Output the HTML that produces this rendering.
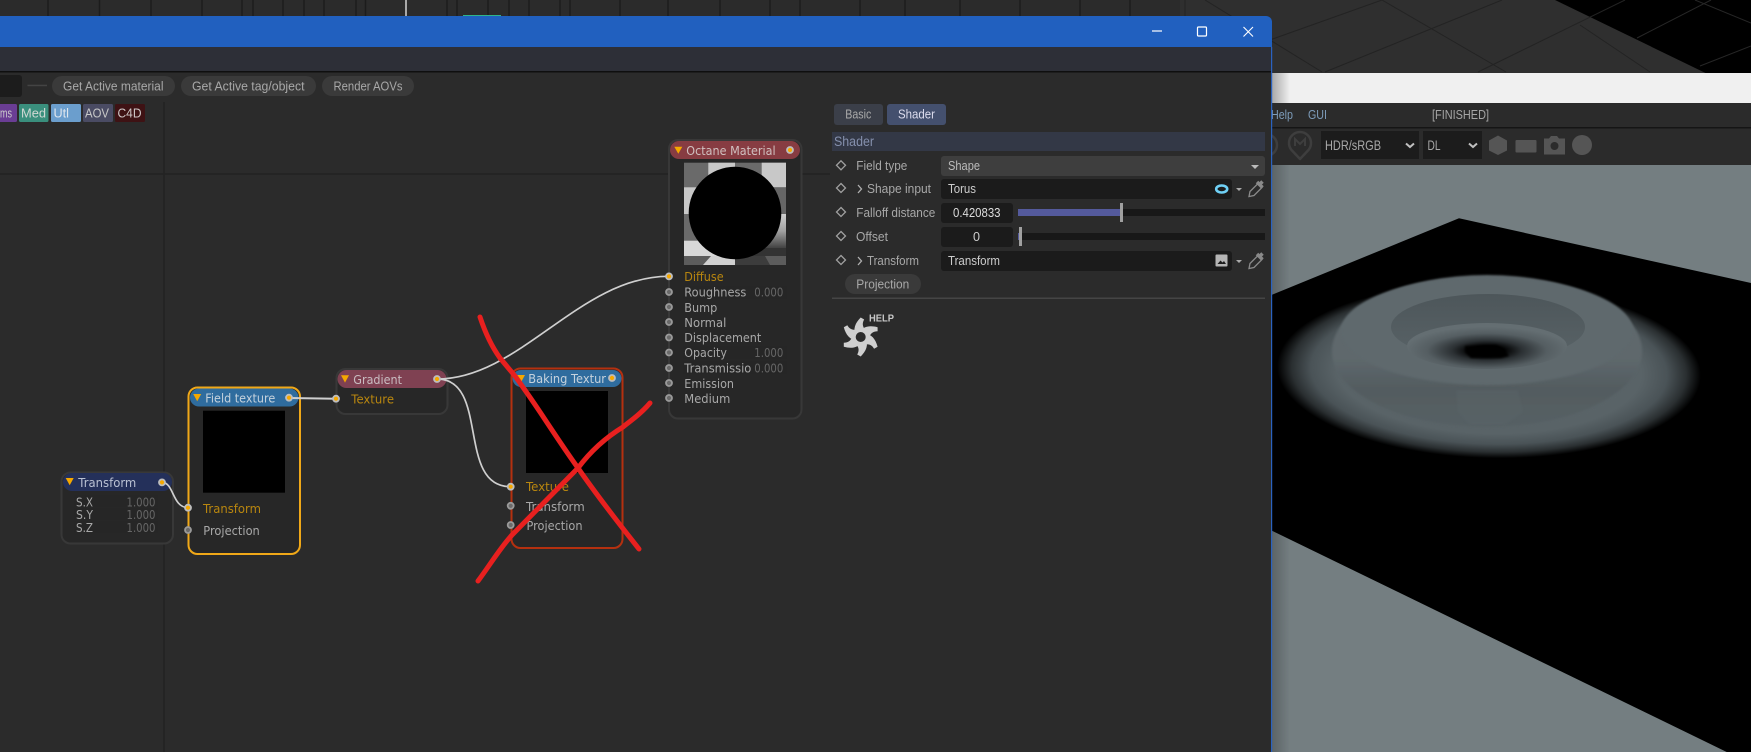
<!DOCTYPE html>
<html><head><meta charset="utf-8"><style>
html,body{margin:0;padding:0;background:#2b2b2b;overflow:hidden}
svg{display:block}
text{font-family:"DejaVu Sans",sans-serif;font-size:12.5px;fill:#a8a8a8}
.l text,text.l{font-family:"Liberation Sans",sans-serif;font-size:12.5px}
.o{fill:#b8860f}
.v{fill:#666}
</style></head><body>
<svg xmlns="http://www.w3.org/2000/svg" width="1751" height="752" viewBox="0 0 1751 752">
<defs>
<linearGradient id="sh" x1="0" x2="1" y1="0" y2="0"><stop offset="0" stop-color="#000" stop-opacity=".3"/><stop offset="1" stop-color="#000" stop-opacity="0"/></linearGradient>
<radialGradient id="outer" cx=".5" cy=".5" r=".5"><stop offset="0" stop-color="#5c666a"/><stop offset=".72" stop-color="#596367"/><stop offset=".84" stop-color="#4a5357"/><stop offset=".93" stop-color="#2a2f31"/><stop offset="1" stop-color="#000"/></radialGradient>
<radialGradient id="floor" cx=".5" cy=".6" r=".52"><stop offset="0" stop-color="#000"/><stop offset=".2" stop-color="#000"/><stop offset=".42" stop-color="#2c3134"/><stop offset=".72" stop-color="#555e62"/><stop offset="1" stop-color="#646e72"/></radialGradient>
<linearGradient id="trough" x1="0" x2="0" y1="0" y2="1"><stop offset="0" stop-color="#4d565a"/><stop offset="1" stop-color="#596367"/></linearGradient>
<linearGradient id="body" x1="0" x2="0" y1="0" y2="1"><stop offset="0" stop-color="#5e686c"/><stop offset=".55" stop-color="#5e686c"/><stop offset=".75" stop-color="#535c60"/><stop offset="1" stop-color="#566064"/></linearGradient>
<linearGradient id="lg" x1="0" x2="0" y1="0" y2="1"><stop offset="0" stop-color="#cfcfcf"/><stop offset=".45" stop-color="#a0a0a0"/><stop offset="1" stop-color="#2c2c2c"/></linearGradient>
<filter id="b1"><feGaussianBlur stdDeviation="1"/></filter>
<path id="blade" d="M0,-19.500 L3.500,-17.500 C1.500,-14 1.500,-11 4.500,-7 L-5,-1 C-8,-8 -5.500,-14 0,-19.500 Z" fill="#cfcfcf"/>
<clipPath id="vp"><rect x="1272" y="165" width="479" height="587"/></clipPath>
</defs>

<rect width="1751" height="752" fill="#2b2b2b"/>

<!-- top strip ticks -->
<g stroke="#1c1c1c" stroke-width="1.5">
<path d="M48,0V16M99.500,0V16M151,0V16M202,0V16M242,0V16M253,0V16M283,0V16M304,0V16M324,0V16M356,0V16M365.500,0V16M447,0V16M457,0V16M488,0V16M509,0V16M529,0V16M560,0V16M570,0V16M620,0V16M668,0V16M720,0V16M770,0V16M800,0V16M860,0V16M905,0V16M960,0V16M1020,0V16M1080,0V16M1130,0V16M1186,0V16"/>
</g>
<rect x="405" y="0" width="2" height="16" fill="#a9a9a9"/>
<rect x="463" y="15" width="38" height="2" fill="#2fb58a"/>

<!-- 3D viewport top -->
<rect x="1180" y="0" width="571" height="73" fill="#2f2f2f"/>
<polygon points="1555,0 1751,0 1751,73 1705.500,73" fill="#000"/>
<g stroke="#232323" stroke-width="1" fill="none">
<path d="M1225,56L1382,0M1382,0L1506,72M1325,72L1502,0M1205,0L1322,72M1478,72L1625,0M1580,25L1650,72M1185,0V18"/>
</g>
<g stroke="#262626" stroke-width="1" fill="none">
<path d="M1637,38L1711,0M1695,0L1751,23M1700,66L1751,46"/>
</g>

<!-- white strip -->
<rect x="1272" y="73" width="479" height="30" fill="#f0f0f0"/>
<rect x="1272" y="73" width="18" height="30" fill="url(#sh)"/>

<!-- help row and toolbar -->
<rect x="1272" y="103" width="479" height="62" fill="#2b2b2b"/>
<rect x="1272" y="127" width="479" height="1.500" fill="#151515"/>
<g class="l">
<text x="1271" y="119" textLength="22" lengthAdjust="spacingAndGlyphs" style="fill:#7d9cba">Help</text>
<text x="1308" y="119" textLength="19" lengthAdjust="spacingAndGlyphs" style="fill:#7d9cba">GUI</text>
<text x="1432" y="119" textLength="57" lengthAdjust="spacingAndGlyphs" style="fill:#a5a5a5">[FINISHED]</text>
</g>
<circle cx="1266" cy="145" r="11" fill="none" stroke="#3e3e3e" stroke-width="2.500"/>
<path d="M1291.500,150a11,11 0 1 1 17,0L1300,159Z" fill="none" stroke="#3e3e3e" stroke-width="2.500" stroke-linejoin="round"/>
<path d="M1295,146v-7l5,5 5,-5v7" fill="none" stroke="#3e3e3e" stroke-width="2"/>
<rect x="1321" y="131" width="98" height="28" fill="#1c1c1c"/>
<rect x="1423" y="131" width="59" height="28" fill="#1c1c1c"/>
<g class="l">
<text x="1325" y="150" textLength="56" lengthAdjust="spacingAndGlyphs" style="fill:#a8a8a8;font-size:14px">HDR/sRGB</text>
<text x="1427.500" y="150" textLength="13" lengthAdjust="spacingAndGlyphs" style="fill:#a8a8a8;font-size:14px">DL</text>
</g>
<path d="M1406,143.500l4,3.500 4,-3.500M1469,143.500l4,3.500 4,-3.500" fill="none" stroke="#c0c0c0" stroke-width="2"/>
<polygon points="1498,135.500 1507,140.500 1507,150.500 1498,155 1489,150.500 1489,140.500" fill="#555"/>
<rect x="1515.500" y="140" width="21" height="12.500" rx="1" fill="#555"/>
<path d="M1544,138.500h5l2,-2.500h6l2,2.500h6v16h-21Z" fill="#555"/><circle cx="1554.500" cy="146" r="4" fill="#2b2b2b"/>
<circle cx="1582" cy="145" r="10" fill="#555"/>

<!-- viewport -->
<rect x="1272" y="165" width="479" height="587" fill="#747e81"/>
<polygon points="1272,294.700 1459,218.300 1751,283 1751,752 1726.700,752 1272,530.700" fill="#000"/>
<rect x="1272" y="165" width="18" height="130" fill="url(#sh)" opacity=".7"/>
<rect x="1272" y="531" width="18" height="221" fill="url(#sh)" opacity=".7"/>

<g clip-path="url(#vp)">
<ellipse cx="1489" cy="371" rx="212" ry="87" fill="url(#outer)" transform="rotate(1.500 1489 371)"/>
<ellipse cx="1487" cy="351" rx="155" ry="76" fill="url(#body)" filter="url(#b1)"/>
<ellipse cx="1487" cy="331" rx="146" ry="54" fill="#5e696d" filter="url(#b1)"/>
<polygon points="1456,390 1518,390 1523,412 1505,425 1470,425 1458,412" fill="#5c666b" opacity=".35" filter="url(#b1)"/>
<ellipse cx="1488" cy="327" rx="97" ry="33" fill="url(#trough)"/>
<ellipse cx="1487" cy="346" rx="80" ry="23" fill="url(#floor)"/>
<path d="M1465,346h22l9,-1 9,5 4,6 -8,2h-30l-6,-6Z" fill="#000" filter="url(#b1)"/>
</g>

<!-- window -->
<path d="M0,16H1266a6,6 0 0 1 6,6V47H0Z" fill="#2160bf"/>
<rect x="0" y="47" width="1271" height="24" fill="#2d2f37"/>
<rect x="0" y="71" width="1271" height="1.500" fill="#0f0f0f"/>
<rect x="0" y="72.500" width="1271" height="680" fill="#2b2b2b"/>
<rect x="1271" y="47" width="1.200" height="705" fill="#2a62c0"/>
<path d="M1152,31h10" stroke="#fff" stroke-width="1.200"/>
<rect x="1197.500" y="27" width="9" height="9" rx="1" fill="none" stroke="#fff" stroke-width="1.200"/>
<path d="M1243.500,27l9.500,9.500M1253,27l-9.500,9.500" stroke="#fff" stroke-width="1.100"/>

<!-- node grid -->
<path d="M164,102V752" stroke="#232323" stroke-width="1.500"/>
<path d="M0,174H830" stroke="#232323" stroke-width="1.500"/>

<!-- toolbar -->
<rect x="-4" y="75" width="26" height="22" rx="3" fill="#1c1c1c"/>
<rect x="27.500" y="84.700" width="19.500" height="1.500" fill="#444"/>
<rect x="52" y="76" width="123" height="20" rx="10" fill="#3a3a3a"/>
<rect x="181" y="76" width="135" height="20" rx="10" fill="#3a3a3a"/>
<rect x="322" y="76" width="92" height="20" rx="10" fill="#3a3a3a"/>
<g class="l">
<text x="63" y="90.500" textLength="100.500" lengthAdjust="spacingAndGlyphs" style="font-size:13px">Get Active material</text>
<text x="192" y="90.500" textLength="112.500" lengthAdjust="spacingAndGlyphs" style="font-size:13px">Get Active tag/object</text>
<text x="333.500" y="90.500" textLength="69" lengthAdjust="spacingAndGlyphs" style="font-size:13px">Render AOVs</text>
</g>

<!-- tags -->
<rect x="-5" y="104" width="22" height="18" rx="1.500" fill="#6a3d94"/>
<rect x="19" y="104" width="29.500" height="18" rx="1.500" fill="#3a8f7d"/>
<rect x="51" y="104" width="30" height="18" rx="1.500" fill="#6b9ecd"/>
<rect x="83" y="104" width="30" height="18" rx="1.500" fill="#4a4b63"/>
<rect x="115" y="104" width="30" height="18" rx="1.500" fill="#3e1214"/>
<g class="l">
<text x="0" y="117.500" textLength="12" lengthAdjust="spacingAndGlyphs" style="fill:#ccc">ms</text>
<text x="21" y="117.500" textLength="25" lengthAdjust="spacingAndGlyphs" style="fill:#d0d8d4;font-size:13px">Med</text>
<text x="53.500" y="117.500" textLength="15.500" lengthAdjust="spacingAndGlyphs" style="fill:#dfe6ee;font-size:13px">Utl</text>
<text x="85" y="117.500" textLength="24" lengthAdjust="spacingAndGlyphs" style="fill:#c8c8c8;font-size:13px">AOV</text>
<text x="117.500" y="117.500" textLength="24" lengthAdjust="spacingAndGlyphs" style="fill:#d0c8c8;font-size:13px">C4D</text>
</g>

<!-- panel -->
<rect x="834" y="104" width="49" height="21" rx="3" fill="#3b3f49"/>
<rect x="887" y="104" width="59" height="21" rx="3" fill="#44506e"/>
<rect x="832" y="132" width="433" height="19" fill="#333846"/>
<rect x="941" y="156" width="324" height="20" rx="3" fill="#3e3e3e"/>
<rect x="941" y="179" width="291" height="20" rx="3" fill="#1b1b1b"/>
<rect x="941" y="203" width="72" height="20" rx="3" fill="#1b1b1b"/>
<rect x="1018" y="209" width="247" height="7" fill="#181818"/>
<rect x="1018" y="209" width="103" height="7" fill="#545a9c"/>
<rect x="1120" y="203" width="3" height="19" fill="#a0a0a0"/>
<rect x="941" y="227" width="72" height="20" rx="3" fill="#1b1b1b"/>
<rect x="1018" y="233" width="247" height="7" fill="#181818"/>
<rect x="1018" y="233" width="2" height="7" fill="#545a9c"/>
<rect x="1019" y="227" width="3" height="19" fill="#a0a0a0"/>
<rect x="941" y="251" width="291" height="20" rx="3" fill="#1b1b1b"/>
<rect x="845" y="274" width="76" height="20" rx="10" fill="#3a3a3a"/>
<rect x="832" y="297.500" width="433" height="1.500" fill="#454545"/>
<g fill="none" stroke="#a0a0a0" stroke-width="1.300">
<path d="M841,160.800l4.500,4.500 -4.500,4.500 -4.500,-4.500Z"/>
<path d="M841,183.500l4.500,4.500 -4.500,4.500 -4.500,-4.500Z"/>
<path d="M841,207.500l4.500,4.500 -4.500,4.500 -4.500,-4.500Z"/>
<path d="M841,231.500l4.500,4.500 -4.500,4.500 -4.500,-4.500Z"/>
<path d="M841,255.500l4.500,4.500 -4.500,4.500 -4.500,-4.500Z"/>
<path d="M858,185l3.500,4 -3.500,4M858,257l3.500,4 -3.500,4" stroke="#b0b0b0"/>
</g>
<g class="l">
<text x="845.300" y="118.500" textLength="26" lengthAdjust="spacingAndGlyphs" style="fill:#aaa;font-size:13px">Basic</text>
<text x="898" y="118.500" textLength="37" lengthAdjust="spacingAndGlyphs" style="fill:#dde;font-size:13px">Shader</text>
<text x="834" y="146" textLength="40" lengthAdjust="spacingAndGlyphs" style="fill:#8590ad;font-size:13.500px">Shader</text>
<text x="856.300" y="170" textLength="51" lengthAdjust="spacingAndGlyphs" style="font-size:13px">Field type</text>
<text x="867" y="193" textLength="64" lengthAdjust="spacingAndGlyphs" style="font-size:13px">Shape input</text>
<text x="856.300" y="217" textLength="79" lengthAdjust="spacingAndGlyphs" style="font-size:13px">Falloff distance</text>
<text x="856" y="241" textLength="32" lengthAdjust="spacingAndGlyphs" style="font-size:13px">Offset</text>
<text x="867" y="265" textLength="52" lengthAdjust="spacingAndGlyphs" style="font-size:13px">Transform</text>
<text x="948" y="170" textLength="32" lengthAdjust="spacingAndGlyphs" style="fill:#bbb;font-size:13px">Shape</text>
<text x="948" y="193" textLength="28" lengthAdjust="spacingAndGlyphs" style="fill:#ccc;font-size:13px">Torus</text>
<text x="953" y="217" textLength="47.500" lengthAdjust="spacingAndGlyphs" style="fill:#ddd;font-size:13px">0.420833</text>
<text x="973" y="241" textLength="7" lengthAdjust="spacingAndGlyphs" style="fill:#ccc;font-size:13px">0</text>
<text x="948" y="265" textLength="52" lengthAdjust="spacingAndGlyphs" style="fill:#ccc;font-size:13px">Transform</text>
<text x="856.300" y="288.500" textLength="53" lengthAdjust="spacingAndGlyphs" style="font-size:13px">Projection</text>
</g>
<path d="M1251,165h8l-4,4Z" fill="#bbb"/>
<path d="M1236,188h6l-3,3Z" fill="#aaa"/>
<path d="M1236,260h6l-3,3Z" fill="#aaa"/>
<ellipse cx="1221.700" cy="189" rx="5.500" ry="3.500" fill="none" stroke="#6fd0f5" stroke-width="2.600"/>
<rect x="1215.500" y="254.500" width="12" height="12" rx="1" fill="#b5b5b5"/>
<path d="M1217.500,264l3,-3.500 2,2 1.500,-1.500 2,3Z" fill="#1b1b1b"/>
<g fill="none" stroke="#8a8a8a">
<path d="M1249,196.500l1,-5 8,-8 4,4 -8,8Z" stroke-width="1.300"/>
<path d="M1257,182l5.500,5.500M1259.500,184.500l3,-3" stroke-width="3.500"/>
<path d="M1249,268.500l1,-5 8,-8 4,4 -8,8Z" stroke-width="1.300"/>
<path d="M1257,254l5.500,5.500M1259.500,256.500l3,-3" stroke-width="3.500"/>
</g>
<!-- Octane logo -->
<g transform="translate(860.700 337)">
<use href="#blade"/>
<use href="#blade" transform="rotate(60)"/>
<use href="#blade" transform="rotate(120)"/>
<use href="#blade" transform="rotate(180)"/>
<use href="#blade" transform="rotate(240)"/>
<use href="#blade" transform="rotate(300)"/>
<circle r="5" fill="#2b2b2b"/>
</g>
<text x="869" y="321.500" textLength="25" lengthAdjust="spacingAndGlyphs" style="font-family:'Liberation Sans',sans-serif;font-size:10px;font-weight:bold;fill:#c8c8c8">HELP</text>

<!-- Transform node -->
<rect x="61.500" y="472.500" width="111.500" height="71" rx="9" fill="#272727" stroke="#383838" stroke-width="2"/>
<rect x="63" y="473" width="109" height="18" rx="9" fill="#24305a"/>
<rect x="74" y="495" width="84" height="12" fill="#262626"/><rect x="74" y="508" width="84" height="12" fill="#262626"/><rect x="74" y="521" width="84" height="12" fill="#262626"/>
<path d="M65.700,478h8l-4,7.300Z" fill="#f5a800"/>
<text x="78.300" y="487" textLength="58" lengthAdjust="spacingAndGlyphs" style="fill:#b9c0d2">Transform</text>
<text x="76" y="506.500" textLength="17" lengthAdjust="spacingAndGlyphs" style="font-size:12px;">S.X</text>
<text x="76" y="519" textLength="17" lengthAdjust="spacingAndGlyphs" style="font-size:12px;">S.Y</text>
<text x="76" y="532" textLength="17" lengthAdjust="spacingAndGlyphs" style="font-size:12px;">S.Z</text>
<text class="v" x="126.500" y="506.500" textLength="29" lengthAdjust="spacingAndGlyphs" style="font-size:12px;">1.000</text>
<text class="v" x="126.500" y="519" textLength="29" lengthAdjust="spacingAndGlyphs" style="font-size:12px;">1.000</text>
<text class="v" x="126.500" y="532" textLength="29" lengthAdjust="spacingAndGlyphs" style="font-size:12px;">1.000</text>

<!-- Field texture -->
<rect x="188.500" y="387.500" width="111.500" height="166.500" rx="9" fill="#272727" stroke="#f0a818" stroke-width="2"/>
<rect x="190" y="388.500" width="108.500" height="18" rx="9" fill="#2f6c9e"/>
<rect x="203" y="410.700" width="82" height="82" fill="#000"/>
<path d="M193.200,394h8l-4,7.300Z" fill="#f5a800"/>
<text x="205.300" y="402.500" textLength="70" lengthAdjust="spacingAndGlyphs" style="fill:#c5d2dd">Field texture</text>
<text class="o" x="203" y="513" textLength="58" lengthAdjust="spacingAndGlyphs">Transform</text>
<text x="203.300" y="535" textLength="56.500" lengthAdjust="spacingAndGlyphs">Projection</text>

<!-- Gradient -->
<rect x="336.500" y="369" width="111" height="45" rx="9" fill="#272727" stroke="#383838" stroke-width="2"/>
<rect x="337.500" y="370" width="109" height="18" rx="9" fill="#7f4152"/>
<path d="M341,375.300h8l-4,7.300Z" fill="#f5a800"/>
<text x="353.300" y="384" textLength="48.700" lengthAdjust="spacingAndGlyphs" style="fill:#c9bcc1">Gradient</text>
<text class="o" x="351.300" y="403.500" textLength="42.700" lengthAdjust="spacingAndGlyphs">Texture</text>

<!-- Baking Texture -->
<rect x="511.500" y="368.500" width="111" height="179.500" rx="9" fill="#272727" stroke="#b5300f" stroke-width="2"/>
<rect x="512.500" y="370" width="109" height="17" rx="8.500" fill="#2f6c9e"/>
<rect x="526" y="391" width="82" height="82" fill="#000"/>
<path d="M517,375h8l-4,7.300Z" fill="#f5a800"/>
<text x="528.300" y="383" textLength="77.700" lengthAdjust="spacingAndGlyphs" style="fill:#c5d2dd">Baking Textur</text>
<text class="o" x="526" y="491" textLength="43" lengthAdjust="spacingAndGlyphs">Texture</text>
<text x="526" y="511" textLength="58.700" lengthAdjust="spacingAndGlyphs">Transform</text>
<text x="526.500" y="530" textLength="56" lengthAdjust="spacingAndGlyphs">Projection</text>

<!-- Octane Material -->
<rect x="669" y="140" width="132.500" height="278.500" rx="9" fill="#272727" stroke="#383838" stroke-width="2"/>
<rect x="670" y="141" width="130" height="18" rx="9" fill="#873c42"/>
<path d="M674.300,146.700h8l-4,7Z" fill="#f5a800"/>
<text x="686.300" y="155" textLength="89.300" lengthAdjust="spacingAndGlyphs" style="fill:#d0c0c0">Octane Material</text>
<!-- preview -->
<rect x="684" y="162.700" width="102" height="102.300" fill="#6a6a6a"/>
<rect x="708.300" y="162.700" width="26.700" height="24.600" fill="#c8c8c8"/>
<rect x="761.700" y="162.700" width="24.300" height="24.600" fill="#c8c8c8"/>
<rect x="684" y="187.300" width="24.300" height="26.700" fill="#c8c8c8"/>
<rect x="761.700" y="187.300" width="24.300" height="26.700" fill="#666"/>
<rect x="761.700" y="214" width="24.300" height="38" fill="url(#lg)"/>
<rect x="684" y="240.700" width="51" height="15.300" fill="#d8d8d8"/>
<rect x="735" y="248" width="51" height="8" fill="#333"/>
<rect x="684" y="256" width="102" height="9" fill="#5c5c5c"/>
<polygon points="703,265 711,256 735,256 735,265" fill="#d0d0d0"/>
<polygon points="735,265 735,256 765,256 770,265" fill="#3c3c3c"/>
<circle cx="735" cy="213" r="46.300" fill="#000"/>
<g>
<text class="o" x="684.300" y="281" textLength="39.300" lengthAdjust="spacingAndGlyphs">Diffuse</text>
<rect x="683" y="286" width="104" height="13" fill="#262626"/>
<text x="684.300" y="296.500" textLength="62" lengthAdjust="spacingAndGlyphs">Roughness</text>
<text class="v" x="754.300" y="296.500" textLength="29" lengthAdjust="spacingAndGlyphs">0.000</text>
<text x="684.300" y="311.800" textLength="33" lengthAdjust="spacingAndGlyphs">Bump</text>
<text x="684.300" y="327" textLength="42" lengthAdjust="spacingAndGlyphs">Normal</text>
<text x="684.300" y="342" textLength="77" lengthAdjust="spacingAndGlyphs">Displacement</text>
<rect x="683" y="346" width="104" height="13" fill="#262626"/>
<text x="684.300" y="357" textLength="42.600" lengthAdjust="spacingAndGlyphs">Opacity</text>
<text class="v" x="754.300" y="357" textLength="29" lengthAdjust="spacingAndGlyphs">1.000</text>
<rect x="683" y="361" width="104" height="13" fill="#262626"/>
<text x="684.300" y="372.500" textLength="67" lengthAdjust="spacingAndGlyphs">Transmissio</text>
<text class="v" x="754.300" y="372.500" textLength="29" lengthAdjust="spacingAndGlyphs">0.000</text>
<text x="684.300" y="387.800" textLength="49.700" lengthAdjust="spacingAndGlyphs">Emission</text>
<text x="684.300" y="402.800" textLength="46" lengthAdjust="spacingAndGlyphs">Medium</text>
</g>

<!-- wires -->
<g fill="none" stroke="#cfcfcf" stroke-width="1.700">
<path d="M162,482.500C174,482 172,507.500 188,507.700"/>
<path d="M289,398L336,398.700" stroke-width="2"/>
<path d="M437,379C520,379 580,276 669,276.300"/>
<path d="M437,379C490,379 456,487 510.700,486.700"/>
</g>

<!-- sockets -->
<g stroke="#bdbdbd" stroke-width="1.800" fill="#f5a800">
<circle cx="162" cy="482.400" r="3"/>
<circle cx="188" cy="507.700" r="3"/>
<circle cx="289" cy="397.700" r="3"/>
<circle cx="336" cy="398.700" r="3"/>
<circle cx="437" cy="379" r="3"/>
<circle cx="510.700" cy="486.700" r="3"/>
<circle cx="612" cy="378" r="3"/>
<circle cx="669" cy="276.400" r="3"/>
<circle cx="790" cy="150" r="3"/>
</g>
<g stroke="#9a9a9a" stroke-width="1.800" fill="#6a6a6a">
<circle cx="188" cy="530" r="3"/>
<circle cx="510.700" cy="505.800" r="3"/>
<circle cx="510.700" cy="525" r="3"/>
<circle cx="669" cy="292" r="3"/>
<circle cx="669" cy="307" r="3"/>
<circle cx="669" cy="322" r="3"/>
<circle cx="669" cy="337.500" r="3"/>
<circle cx="669" cy="352.500" r="3"/>
<circle cx="669" cy="368" r="3"/>
<circle cx="669" cy="383" r="3"/>
<circle cx="669" cy="398" r="3"/>
</g>

<!-- red X -->
<g fill="none" stroke="#e8201f" stroke-width="5" stroke-linecap="round" stroke-linejoin="round">
<path d="M480,317C486,335 492,347 500,358L515,376C525,390 532,400 540,412C552,430 565,450 578,468C598,497 620,525 639,549"/>
<path d="M650,403C640,415 630,421 623,427C605,438 590,452 578,468L512,535C500,548 490,565 478,581"/>
</g>
</svg>
</body></html>
